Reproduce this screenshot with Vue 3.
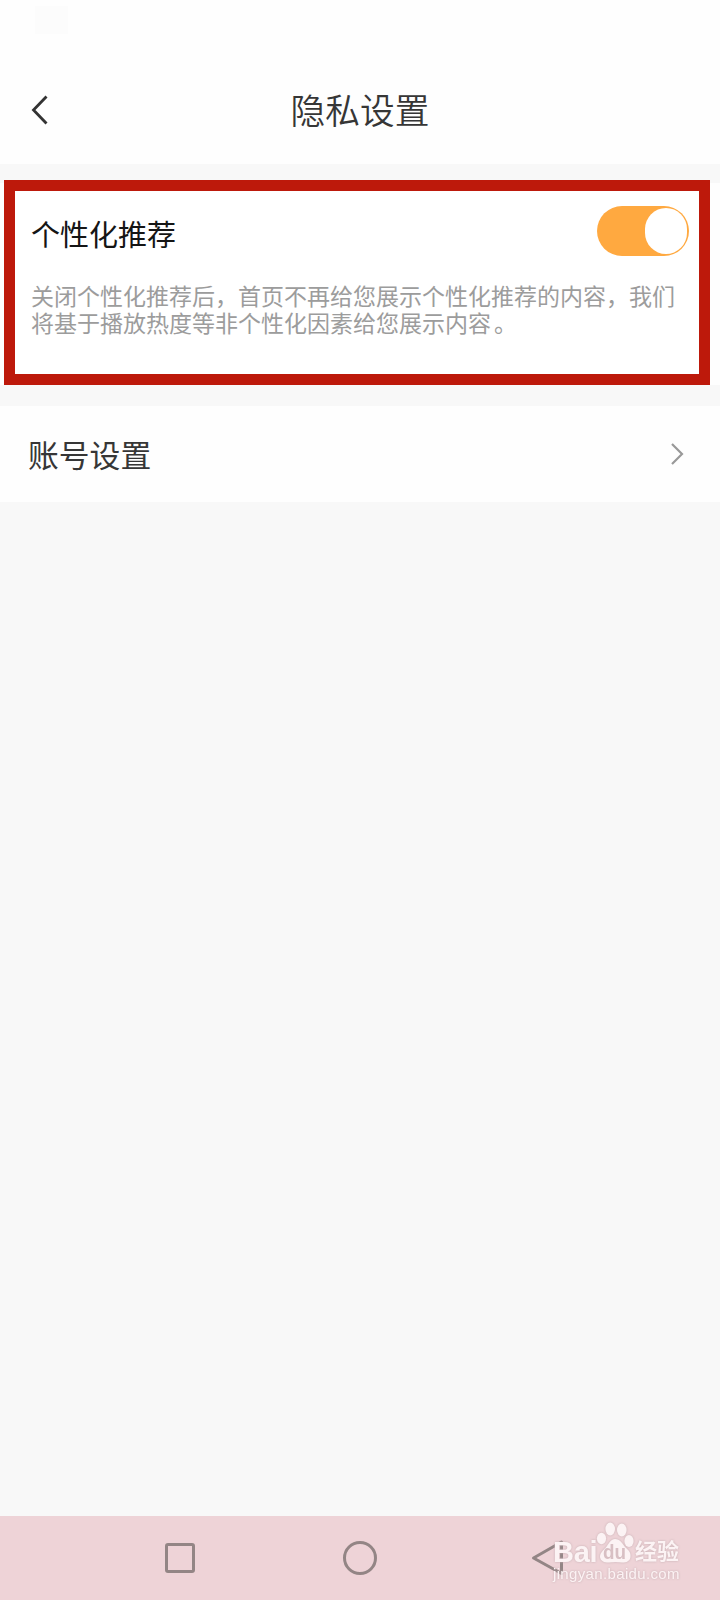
<script setup>
import { ref } from 'vue'

const personalised = ref(true)
</script>

<template>
  <div class="screen">
    <header class="header">
      <i class="status-mark"></i>
      <div class="title-bar">
        <svg class="back" width="18" height="32" viewBox="0 0 18 32">
          <path d="M15.5 2.5 2.5 16 15.5 29.500" />
        </svg>
        <h1>隐私设置</h1>
      </div>
    </header>

    <section class="section">
      <div class="card">
        <div class="card-head">
          <span class="card-title">个性化推荐</span>
          <button class="switch" :class="{ on: personalised }" @click="personalised = !personalised">
            <i class="knob"></i>
          </button>
        </div>
        <p>关闭个性化推荐后，首页不再给您展示个性化推荐的内容，我们<br />将基于播放热度等非个性化因素给您展示内容<span class="stop">。</span></p>
      </div>
    </section>

    <div class="row">
      <span class="row-label">账号设置</span>
      <svg width="14" height="24" viewBox="0 0 14 24">
        <path d="M2 2 12 12 2 22" />
      </svg>
    </div>

    <nav class="nav">
      <svg class="nav-icons" width="720" height="84" viewBox="0 0 720 84">
        <rect x="166.500" y="28.500" width="27" height="27" rx="1.500" />
        <circle cx="360" cy="42" r="15.500" />
        <path d="M561.500 26 533.500 42 561.500 57.500Z" />
      </svg>
      <div class="mark">
        <div class="brand">
          <span class="bai">Bai</span>
          <svg class="paw" width="40" height="44" viewBox="0 0 40 44">
            <ellipse cx="5.500" cy="17.500" rx="4.600" ry="5.800" />
            <ellipse cx="14.200" cy="8" rx="4.800" ry="6.400" />
            <ellipse cx="25.800" cy="9" rx="4.800" ry="6.400" />
            <ellipse cx="33" cy="20" rx="4.600" ry="6" />
            <path d="M19 18C24 18 26 22 29 26C33 30 35 31 34.500 36C33.500 42 28 42 19.500 41C11 42 5 42 4 36C4 31 8 29 11 25C13 22 15 18 19 18Z" />
            <text x="7" y="37.500" textLength="23" lengthAdjust="spacingAndGlyphs">du</text>
          </svg>
          <span class="jing">经验</span>
        </div>
        <div class="site">jingyan.baidu.com</div>
      </div>
    </nav>
  </div>
</template>

<style>
body {
  margin: 0;
  background: #f7f8f8;
}
</style>

<style scoped>
.screen {
  width: 720px;
  height: 1600px;
  display: flex;
  flex-direction: column;
  overflow: hidden;
  background: #f8f8f8;
  font-family: "Liberation Sans", "Noto Sans CJK SC", sans-serif;
  color: #363636;
}
.header {
  height: 164px;
  background: #fefefe;
  box-sizing: border-box;
  padding-top: 6px;
}
.status-mark {
  display: block;
  width: 33px;
  height: 28px;
  margin-left: 35px;
  background: #fcfcfc;
}
.title-bar {
  display: grid;
  grid-template-columns: 60px 1fr 60px;
  align-items: center;
  height: 90px;
  margin-top: 30px;
}
svg {
  fill: none;
  display: block;
}
.back {
  margin: 2px 0 0 31px;
  stroke: #333;
  stroke-width: 2.8;
}
h1 {
  margin: 0;
  font-family: "Noto Sans CJK SC", sans-serif;
  font-size: 34.7px;
  line-height: 50px;
  font-weight: 350;
  text-align: center;
}
.section {
  margin-top: 16px;
  padding: 0 10px 0 4px;
  background: linear-gradient(#f8f8f8 3px, #fefefe 3px);
}
.card {
  height: 205px;
  box-sizing: border-box;
  border: 11px solid #bd190b;
  background: #fff;
  padding: 15px 10px 0 16px;
}
.card-head {
  display: flex;
  justify-content: space-between;
  height: 50px;
}
.card-title {
  color: #151515;
  font-size: 29px;
  line-height: 60px;
}
.switch {
  width: 92px;
  height: 50px;
  padding: 2px;
  border: 0;
  border-radius: 25px;
  background: #ccc;
  display: flex;
  align-items: center;
}
.switch.on {
  background: #ffa940;
  justify-content: flex-end;
}
.knob {
  width: 42px;
  height: 46px;
  border-radius: 23px;
  background: #fff;
}
p {
  margin: 28px 0 0;
  font-size: 23px;
  line-height: 27px;
  color: #9c9c9c;
  white-space: nowrap;
}
.stop {
  margin-left: 3px;
}
.row {
  display: flex;
  align-items: center;
  justify-content: space-between;
  height: 96px;
  margin-top: 21px;
  padding: 0 36px 0 28px;
  background: #fefefe;
  font-size: 30.8px;
}
.row-label {
  margin-top: -2px;
}
.row svg {
  margin-top: -1px;
  stroke: #999;
  stroke-width: 2.2;
}
.nav {
  position: relative;
  height: 84px;
  margin-top: auto;
  background: #eed3d7;
}
.nav-icons {
  stroke: #938585;
  stroke-width: 3;
  stroke-linejoin: round;
}
.mark {
  position: absolute;
  left: 553px;
  top: 5px;
  color: #fcf3f4;
  filter: drop-shadow(0 0 1px #c5aeb2);
}
.brand {
  display: flex;
  height: 44px;
}
.bai {
  width: 43px;
  font-size: 29px;
  line-height: 63px;
  font-weight: bold;
  letter-spacing: -0.3px;
}
.paw {
  fill: #fcf3f4;
}
.paw text {
  fill: #d8bfc3;
  font-size: 21px;
  font-weight: bold;
}
.jing {
  margin-left: -1px;
  font-size: 22px;
  line-height: 62px;
  font-weight: bold;
  white-space: nowrap;
}
.site {
  font-family: "Liberation Sans", sans-serif;
  font-size: 15px;
  line-height: 18px;
  letter-spacing: 0.35px;
}
</style>
